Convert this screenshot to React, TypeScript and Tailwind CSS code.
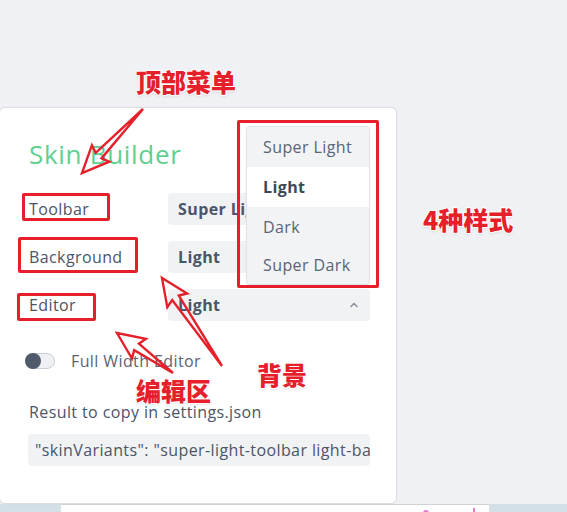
import React from "react";

type Pt = [number, number];

function arrowPoints(t: Pt, p: Pt, headLen: number, headHalf: number, shaftHalf: number): string {
  const dx = p[0] - t[0];
  const dy = p[1] - t[1];
  const len = Math.hypot(dx, dy);
  const ux = dx / len;
  const uy = dy / len;
  const nx = -uy;
  const ny = ux;
  const bx = p[0] - ux * headLen;
  const by = p[1] - uy * headLen;
  const bbx = p[0] - ux * (headLen + 3);
  const bby = p[1] - uy * (headLen + 3);
  const pts: Pt[] = [
    t,
    [bx + nx * shaftHalf, by + ny * shaftHalf],
    [bbx + nx * headHalf, bby + ny * headHalf],
    p,
    [bbx - nx * headHalf, bby - ny * headHalf],
    [bx - nx * shaftHalf, by - ny * shaftHalf],
  ];
  return pts.map((q) => `${q[0].toFixed(1)},${q[1].toFixed(1)}`).join(" ");
}

const arrows: { t: Pt; p: Pt }[] = [
  { t: [143, 109], p: [82, 173] },
  { t: [222, 366], p: [162, 278] },
  { t: [173, 373], p: [117, 333] },
];

const font = "font-['Open_Sans','Noto_Sans',sans-serif] tracking-[0.4px]";
const cjk = "font-['Noto_Sans_CJK_SC','Noto_Sans',sans-serif] tracking-normal";
const halo =
  "[text-shadow:0_0_2px_#fff,1px_1px_1px_#fff,-1px_-1px_1px_#fff,1px_-1px_1px_#fff,-1px_1px_1px_#fff,0_1px_3px_rgba(0,0,0,0.25)]";

export default function App() {
  return (
    <div className={`relative w-[567px] h-[512px] overflow-hidden bg-[#f0f1f4] ${font}`}>
      <div className="flex flex-col h-full">
        <div className="h-[107px] shrink-0" />
        {/* Card */}
        <div className="relative w-[398px] h-[397px] shrink-0 bg-white border border-[#dcdde0] rounded-[6px] ml-[-1px] pl-[29px] pr-[28px] pt-[30px] text-[#4a5568] shadow-[0_0_2px_rgba(0,0,0,0.06)]">
          <h1 className="text-[26px] leading-[32px] font-medium text-[#5fcf8f] tracking-[0.7px]">Skin Builder</h1>
          <div className="grid grid-cols-[139px_202px] gap-y-[16px] mt-[23px]">
            <div className="h-[32px] flex items-center text-[16px]">Toolbar</div>
            <div className="h-[32px] flex items-center rounded-[4px] bg-[#f1f2f4] px-[10px] text-[16px] font-bold">Super Light</div>
            <div className="h-[32px] flex items-center text-[16px]">Background</div>
            <div className="h-[32px] flex items-center rounded-[4px] bg-[#f1f2f4] px-[10px] text-[16px] font-bold">Light</div>
            <div className="h-[32px] flex items-center text-[16px]">Editor</div>
            <div className="h-[32px] flex items-center justify-between rounded-[4px] bg-[#f1f2f4] px-[10px] text-[16px] font-bold">
              <span>Light</span>
              <svg width="10" height="10" viewBox="0 0 10 10" className="mr-[1px]">
                <path d="M2 6.5 L5 3.5 L8 6.5" stroke="#8a939f" strokeWidth="1.6" fill="none" strokeLinecap="round" strokeLinejoin="round" />
              </svg>
            </div>
          </div>
          <div className="flex items-center mt-[31px] h-[17px] ml-[-4px]">
            <div className="relative w-[30px] h-[16px] rounded-full bg-[#eef0f3] border border-[#c9ced6]">
              <div className="absolute left-[-1px] top-[-1px] w-[16px] h-[16px] rounded-full bg-[#4f5a6b]" />
            </div>
            <span className="ml-[16px] text-[16px] text-[#5a6474]">Full Width Editor</span>
          </div>
          <div className="mt-[33px] text-[16px] leading-[20px]">Result to copy in settings.json</div>
          <div className="mt-[12px] h-[32px] w-[342px] ml-[-1px] flex items-center rounded-[4px] bg-[#f1f2f4] px-[7px] overflow-hidden whitespace-nowrap text-[16px]">
            "skinVariants": "super-light-toolbar light-background light-editor"
          </div>

          {/* Dropdown */}
          <div className="absolute left-[246px] top-[18px] w-[124px] rounded-[4px] border border-[#e3e4e7] bg-[#f2f3f5] overflow-hidden shadow-[0_1px_3px_rgba(0,0,0,0.06)]">
            <div className="h-[40px] flex items-center pl-[16px] text-[16px] text-[#5a6474] whitespace-nowrap">Super Light</div>
            <div className="h-[40px] flex items-center pl-[16px] text-[16px] font-bold bg-white text-[#3f4857]">Light</div>
            <div className="h-[39px] flex items-center pl-[16px] text-[16px] text-[#5a6474]">Dark</div>
            <div className="h-[38px] flex items-center pl-[16px] text-[16px] text-[#5a6474] whitespace-nowrap">Super Dark</div>
          </div>
        </div>
        {/* Bottom strip */}
        <div className="flex h-[8px] shrink-0">
          <div className="w-[61px] bg-[#d3e1e7]" />
          <div className="relative w-[428px] bg-white border-t border-[#cfd2d6]">
            <div className="absolute left-[362px] top-[5px] w-[6px] h-[3px] rounded-t-full bg-[#e879c9]" />
            <div className="absolute left-[412px] top-[3px] w-[2px] h-[5px] bg-[#e879c9]" />
          </div>
          <div className="flex-1 bg-[#d3e1e7]" />
        </div>
      </div>

      {/* Annotation boxes */}
      <div className="absolute left-[22px] top-[193px] w-[88px] h-[28px] border-[3px] border-[#e5202b] rounded-[2px]" />
      <div className="absolute left-[18px] top-[237px] w-[120px] h-[36px] border-[3px] border-[#e5202b] rounded-[2px]" />
      <div className="absolute left-[17px] top-[293px] w-[79px] h-[28px] border-[3px] border-[#e5202b] rounded-[2px]" />
      <div className="absolute left-[237px] top-[120px] w-[142px] h-[168px] border-[3px] border-[#e5202b] rounded-[2px]" />

      {/* Annotation arrows */}
      <svg className="absolute left-0 top-0 pointer-events-none" width="567" height="512" viewBox="0 0 567 512">
        {arrows.map((a, i) => (
          <polygon
            key={i}
            points={arrowPoints(a.t, a.p, 24, 12, 4)}
            fill="none"
            stroke="#e5202b"
            strokeWidth="2.4"
            strokeLinejoin="miter"
          />
        ))}
      </svg>

      {/* Annotation labels */}
      <div className={`absolute left-[136px] top-[68px] text-[25px] leading-[26px] font-black text-[#e5202b] ${cjk} ${halo}`}>顶部菜单</div>
      <div className={`absolute left-[423px] top-[206px] text-[25px] leading-[26px] font-black text-[#e5202b] ${cjk} ${halo}`}>4种样式</div>
      <div className={`absolute left-[257px] top-[361px] text-[25px] leading-[26px] font-black text-[#e5202b] ${cjk} ${halo}`}>背景</div>
      <div className={`absolute left-[136px] top-[377px] text-[25px] leading-[26px] font-black text-[#e5202b] ${cjk} ${halo}`}>编辑区</div>
    </div>
  );
}
